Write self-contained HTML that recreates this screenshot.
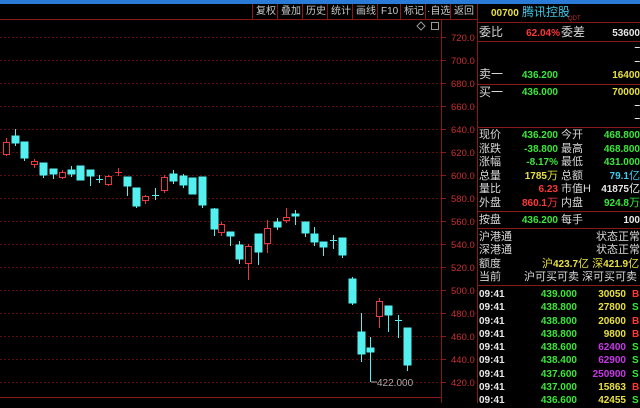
<!DOCTYPE html>
<html><head><meta charset="utf-8"><style>
*{margin:0;padding:0;box-sizing:border-box}
body{width:640px;height:403px;background:#000;overflow:hidden;position:relative;font-family:"Liberation Sans","Noto Sans CJK SC",sans-serif;color:#ddd}
.a{position:absolute;white-space:nowrap;line-height:13px}
.l{font-size:11px;color:#d8d8d8}
.v{font-size:10px;font-weight:bold;text-align:right}
.g{color:#3ae83a}.y{color:#e8e040}.r{color:#ff3838}.w{color:#e8e8e8}.c{color:#3cc8f0}.m{color:#c838e8}
.tb{position:absolute;top:5px;font-size:10px;color:#c8c8c8;line-height:14px}
.hl{position:absolute;left:477px;width:163px;height:1px;background:#8a1818}
</style></head><body>
<div style="position:absolute;left:0;top:0;width:640px;height:4px;background:#2a7ad8"></div>
<div style="position:absolute;left:0;top:19px;width:477px;height:1px;background:#8a1818"></div>
<div style="position:absolute;left:477px;top:4px;width:1px;height:399px;background:#8a1818"></div>
<div style="position:absolute;left:441px;top:20px;width:1px;height:383px;background:#8a1818"></div>
<svg style="position:absolute;left:0;top:0" width="477" height="403">
<g stroke="#5a0e0e" stroke-dasharray="2,2">
<line x1="0" x2="441" y1="37.5" y2="37.5"/><line x1="0" x2="441" y1="60.5" y2="60.5"/><line x1="0" x2="441" y1="83.5" y2="83.5"/><line x1="0" x2="441" y1="106.5" y2="106.5"/><line x1="0" x2="441" y1="129.5" y2="129.5"/><line x1="0" x2="441" y1="152.5" y2="152.5"/><line x1="0" x2="441" y1="175.5" y2="175.5"/><line x1="0" x2="441" y1="198.5" y2="198.5"/><line x1="0" x2="441" y1="221.5" y2="221.5"/><line x1="0" x2="441" y1="244.5" y2="244.5"/><line x1="0" x2="441" y1="267.5" y2="267.5"/><line x1="0" x2="441" y1="290.5" y2="290.5"/><line x1="0" x2="441" y1="313.5" y2="313.5"/><line x1="0" x2="441" y1="336.5" y2="336.5"/><line x1="0" x2="441" y1="359.5" y2="359.5"/><line x1="0" x2="441" y1="382.5" y2="382.5"/>
</g>
<line x1="0" x2="441" y1="397.5" y2="397.5" stroke="#8a1818"/>
<g fill="#c83030" font-size="9.5" font-family="Liberation Sans">
<text x="451" y="41">720.0</text><text x="451" y="64">700.0</text><text x="451" y="87">680.0</text><text x="451" y="110">660.0</text><text x="451" y="133">640.0</text><text x="451" y="156">620.0</text><text x="451" y="179">600.0</text><text x="451" y="202">580.0</text><text x="451" y="225">560.0</text><text x="451" y="248">540.0</text><text x="451" y="271">520.0</text><text x="451" y="294">500.0</text><text x="451" y="317">480.0</text><text x="451" y="340">460.0</text><text x="451" y="363">440.0</text><text x="451" y="386">420.0</text>
</g>
<g stroke="#8a1818"><line x1="441" x2="446" y1="37.5" y2="37.5"/><line x1="441" x2="446" y1="60.5" y2="60.5"/><line x1="441" x2="446" y1="83.5" y2="83.5"/><line x1="441" x2="446" y1="106.5" y2="106.5"/><line x1="441" x2="446" y1="129.5" y2="129.5"/><line x1="441" x2="446" y1="152.5" y2="152.5"/><line x1="441" x2="446" y1="175.5" y2="175.5"/><line x1="441" x2="446" y1="198.5" y2="198.5"/><line x1="441" x2="446" y1="221.5" y2="221.5"/><line x1="441" x2="446" y1="244.5" y2="244.5"/><line x1="441" x2="446" y1="267.5" y2="267.5"/><line x1="441" x2="446" y1="290.5" y2="290.5"/><line x1="441" x2="446" y1="313.5" y2="313.5"/><line x1="441" x2="446" y1="336.5" y2="336.5"/><line x1="441" x2="446" y1="359.5" y2="359.5"/><line x1="441" x2="446" y1="382.5" y2="382.5"/></g>
<path d="M421 22l4 4-4 4-4-4z" fill="none" stroke="#999"/>
<rect x="431.5" y="22.5" width="7" height="7" fill="none" stroke="#999"/>
<g stroke="#54f0f0" fill="#54f0f0">
<line x1="15.5" x2="15.5" y1="129" y2="146"/><rect x="12" y="136" width="7" height="7"/>
<line x1="24.5" x2="24.5" y1="142" y2="161"/><rect x="21" y="142" width="7" height="16"/>
<line x1="43.5" x2="43.5" y1="163" y2="178"/><rect x="40" y="163" width="7" height="12"/>
<line x1="53.5" x2="53.5" y1="169" y2="179"/><rect x="50" y="169" width="7" height="5"/>
<line x1="71.5" x2="71.5" y1="166" y2="177"/><rect x="68" y="170" width="7" height="4"/>
<rect x="77" y="166" width="7" height="14"/>
<line x1="90.5" x2="90.5" y1="170" y2="186"/><rect x="87" y="170" width="7" height="6"/>
<line x1="99.5" x2="99.5" y1="175" y2="183"/><line x1="96" x2="103" y1="179.5" y2="179.5"/>
<line x1="127.5" x2="127.5" y1="177" y2="196"/><rect x="124" y="177" width="7" height="9"/>
<line x1="136.5" x2="136.5" y1="188" y2="208"/><rect x="133" y="188" width="7" height="18"/>
<line x1="155.5" x2="155.5" y1="188" y2="200"/><line x1="152" x2="159" y1="195.5" y2="195.5"/>
<line x1="173.5" x2="173.5" y1="170" y2="184"/><rect x="170" y="174" width="7" height="7"/>
<line x1="183.5" x2="183.5" y1="174" y2="188"/><rect x="180" y="176" width="7" height="9"/>
<rect x="189" y="178" width="7" height="16"/>
<line x1="202.5" x2="202.5" y1="177" y2="208"/><rect x="199" y="177" width="7" height="28"/>
<line x1="214.5" x2="214.5" y1="208" y2="236"/><rect x="211" y="209" width="7" height="20"/>
<line x1="230.5" x2="230.5" y1="232" y2="246"/><rect x="227" y="232" width="7" height="4"/>
<line x1="239.5" x2="239.5" y1="241" y2="264"/><rect x="236" y="245" width="7" height="14"/>
<line x1="258.5" x2="258.5" y1="234" y2="265"/><rect x="255" y="234" width="7" height="18"/>
<line x1="277.5" x2="277.5" y1="218" y2="230"/><rect x="274" y="222" width="7" height="5"/>
<line x1="295.5" x2="295.5" y1="210" y2="225"/><rect x="292" y="214" width="7" height="2"/>
<line x1="305.5" x2="305.5" y1="222" y2="237"/><rect x="302" y="222" width="7" height="11"/>
<line x1="314.5" x2="314.5" y1="227" y2="246"/><rect x="311" y="234" width="7" height="8"/>
<line x1="323.5" x2="323.5" y1="242" y2="256"/><rect x="320" y="242" width="7" height="5"/>
<line x1="333.5" x2="333.5" y1="235" y2="249"/><line x1="330" x2="337" y1="240.5" y2="240.5"/>
<line x1="342.5" x2="342.5" y1="238" y2="258"/><rect x="339" y="238" width="7" height="17"/>
<line x1="352.5" x2="352.5" y1="277" y2="305"/><rect x="349" y="279" width="7" height="24"/>
<line x1="361.5" x2="361.5" y1="313" y2="362"/><rect x="358" y="332" width="7" height="22"/>
<line x1="370.5" x2="370.5" y1="337" y2="382"/><rect x="367" y="348" width="7" height="4"/>
<line x1="388.5" x2="388.5" y1="306" y2="332"/><rect x="385" y="306" width="7" height="9"/>
<line x1="398.5" x2="398.5" y1="315" y2="338"/><line x1="395" x2="402" y1="320.5" y2="320.5"/>
<line x1="407.5" x2="407.5" y1="328" y2="371"/><rect x="404" y="328" width="7" height="37"/>
</g>
<g stroke="#e83a3a" fill="none">
<line x1="6.5" x2="6.5" y1="138" y2="156"/><rect x="3.5" y="142.5" width="6" height="12" fill="#000"/>
<line x1="34.5" x2="34.5" y1="159" y2="168"/><rect x="31.5" y="161.5" width="6" height="3" fill="#000"/>
<line x1="62.5" x2="62.5" y1="170" y2="179"/><rect x="59.5" y="172.5" width="6" height="5" fill="#000"/>
<line x1="108.5" x2="108.5" y1="175" y2="186"/><rect x="105.5" y="176.5" width="6" height="8" fill="#000"/>
<line x1="118.5" x2="118.5" y1="168" y2="176"/><line x1="115" x2="122" y1="172.5" y2="172.5"/>
<line x1="145.5" x2="145.5" y1="195" y2="204"/><rect x="142.5" y="196.5" width="6" height="4" fill="#000"/>
<line x1="164.5" x2="164.5" y1="175" y2="193"/><rect x="161.5" y="177.5" width="6" height="13" fill="#000"/>
<line x1="221.5" x2="221.5" y1="222" y2="236"/><rect x="218.5" y="224.5" width="6" height="8" fill="#000"/>
<line x1="248.5" x2="248.5" y1="244" y2="280"/><rect x="245.5" y="246.5" width="6" height="17" fill="#000"/>
<line x1="267.5" x2="267.5" y1="220" y2="253"/><rect x="264.5" y="228.5" width="6" height="15" fill="#000"/>
<line x1="286.5" x2="286.5" y1="208" y2="223"/><rect x="283.5" y="217.5" width="6" height="3" fill="#000"/>
<line x1="379.5" x2="379.5" y1="298" y2="328"/><rect x="376.5" y="301.5" width="6" height="15" fill="#000"/>
</g>
<line x1="371" x2="377" y1="382" y2="382" stroke="#aaa"/>
<text x="377" y="386" fill="#aaa" font-size="10" font-family="Liberation Sans">422.000</text>
</svg>
<!-- toolbar -->
<div style="position:absolute;top:4px;left:0;width:477px;height:15px">
<div style="position:absolute;left:252px;top:0;width:1px;height:15px;background:#8a1818"></div>
<div style="position:absolute;left:277px;top:0;width:1px;height:15px;background:#8a1818"></div>
<div style="position:absolute;left:302px;top:0;width:1px;height:15px;background:#8a1818"></div>
<div style="position:absolute;left:327px;top:0;width:1px;height:15px;background:#8a1818"></div>
<div style="position:absolute;left:352px;top:0;width:1px;height:15px;background:#8a1818"></div>
<div style="position:absolute;left:377px;top:0;width:1px;height:15px;background:#8a1818"></div>
<div style="position:absolute;left:400px;top:0;width:1px;height:15px;background:#8a1818"></div>
<div style="position:absolute;left:425px;top:0;width:1px;height:15px;background:#8a1818"></div>
<div style="position:absolute;left:450px;top:0;width:1px;height:15px;background:#8a1818"></div>
</div>
<div class="tb" style="left:256px">复权</div><div class="tb" style="left:281px">叠加</div><div class="tb" style="left:306px">历史</div><div class="tb" style="left:331px">统计</div><div class="tb" style="left:356px">画线</div><div class="tb" style="left:381px">F10</div><div class="tb" style="left:404px">标记</div><div class="tb" style="left:427px">·自选</div><div class="tb" style="left:454px">返回</div>
<!-- right panel -->
<div class="a" style="left:491px;top:7px;font-size:10px;font-weight:bold;color:#e8e040">00700</div>
<div class="a" style="left:522px;top:6px;font-size:12px;color:#3cc8e8">腾讯控股</div>
<div class="a" style="left:568px;top:13px;font-size:6px;color:#c03030">QDT</div>
<div class="hl" style="top:22px"></div>
<div class="a l" style="left:479px;top:26px;font-size:12px">委比</div>
<div class="a v r" style="left:520px;top:27px;width:40px">62.04%</div>
<div class="a l" style="left:561px;top:26px;font-size:12px">委差</div>
<div class="a v w" style="left:590px;top:27px;width:50px">53600</div>
<div class="hl" style="top:41px"></div>
<div class="a v w" style="left:620px;top:41px;width:20px">–</div>
<div class="a v w" style="left:620px;top:55px;width:20px">–</div>
<div class="a l" style="left:479px;top:68px;font-size:12px">卖一</div>
<div class="a v g" style="left:500px;top:69px;width:58px">436.200</div>
<div class="a v y" style="left:590px;top:69px;width:50px">16400</div>
<div class="hl" style="top:84px"></div>
<div class="a l" style="left:479px;top:86px;font-size:12px">买一</div>
<div class="a v g" style="left:500px;top:86px;width:58px">436.000</div>
<div class="a v y" style="left:590px;top:86px;width:50px">70000</div>
<div class="a v w" style="left:620px;top:99px;width:20px">–</div>
<div class="a v w" style="left:620px;top:112px;width:20px">–</div>
<div class="hl" style="top:127px"></div>
<div class="a l" style="left:479px;top:129px">现价</div><div class="a v g" style="left:500px;top:129px;width:58px">436.200</div><div class="a l" style="left:561px;top:129px">今开</div><div class="a v g" style="left:590px;top:129px;width:50px">468.800</div>
<div class="a l" style="left:479px;top:143px">涨跌</div><div class="a v g" style="left:500px;top:143px;width:58px">-38.800</div><div class="a l" style="left:561px;top:143px">最高</div><div class="a v g" style="left:590px;top:143px;width:50px">468.800</div>
<div class="a l" style="left:479px;top:156px">涨幅</div><div class="a v g" style="left:500px;top:156px;width:58px">-8.17%</div><div class="a l" style="left:561px;top:156px">最低</div><div class="a v g" style="left:590px;top:156px;width:50px">431.000</div>
<div class="a l" style="left:479px;top:170px">总量</div><div class="a v y" style="left:500px;top:170px;width:58px">1785<span style="font-weight:normal;font-size:11px">万</span></div><div class="a l" style="left:561px;top:170px">总额</div><div class="a v c" style="left:590px;top:170px;width:50px">79.1<span style="font-weight:normal;font-size:11px">亿</span></div>
<div class="a l" style="left:479px;top:183px">量比</div><div class="a v r" style="left:500px;top:183px;width:58px">6.23</div><div class="a l" style="left:561px;top:183px">市值H</div><div class="a v w" style="left:590px;top:183px;width:50px">41875<span style="font-weight:normal;font-size:11px">亿</span></div>
<div class="a l" style="left:479px;top:197px">外盘</div><div class="a v r" style="left:500px;top:197px;width:58px">860.1<span style="font-weight:normal;font-size:11px">万</span></div><div class="a l" style="left:561px;top:197px">内盘</div><div class="a v g" style="left:590px;top:197px;width:50px">924.8<span style="font-weight:normal;font-size:11px">万</span></div>
<div class="hl" style="top:211px"></div>
<div class="a l" style="left:479px;top:214px">按盘</div><div class="a v g" style="left:500px;top:214px;width:58px">436.200</div><div class="a l" style="left:561px;top:214px">每手</div><div class="a v w" style="left:590px;top:214px;width:50px">100</div>
<div class="hl" style="top:228px"></div>
<div class="a l" style="left:479px;top:231px">沪港通</div><div class="a l" style="left:596px;top:231px">状态正常</div>
<div class="a l" style="left:479px;top:244px">深港通</div><div class="a l" style="left:596px;top:244px">状态正常</div>
<div class="a l" style="left:479px;top:258px">额度</div><div class="a y" style="left:542px;top:258px;font-size:11px">沪<b style="font-size:10px">423.7</b>亿 深<b style="font-size:10px">421.9</b>亿</div>
<div class="a l" style="left:479px;top:271px">当前</div><div class="a l" style="left:524px;top:271px">沪可买可卖 深可买可卖</div>
<div class="hl" style="top:285px"></div>
<div style="position:absolute;left:479px;top:288px;width:161px;font-size:10px;font-weight:bold;line-height:13.3px">
<div style="position:relative;height:13.3px"><span class="w">09:41</span><span class="g" style="position:absolute;right:63px">439.000</span><span class="y" style="position:absolute;right:14px">30050</span><span class="r" style="position:absolute;left:153px">B</span></div>
<div style="position:relative;height:13.3px"><span class="w">09:41</span><span class="g" style="position:absolute;right:63px">438.800</span><span class="y" style="position:absolute;right:14px">27800</span><span class="g" style="position:absolute;left:153px">S</span></div>
<div style="position:relative;height:13.3px"><span class="w">09:41</span><span class="g" style="position:absolute;right:63px">438.800</span><span class="y" style="position:absolute;right:14px">20600</span><span class="r" style="position:absolute;left:153px">B</span></div>
<div style="position:relative;height:13.3px"><span class="w">09:41</span><span class="g" style="position:absolute;right:63px">438.800</span><span class="y" style="position:absolute;right:14px">9800</span><span class="r" style="position:absolute;left:153px">B</span></div>
<div style="position:relative;height:13.3px"><span class="w">09:41</span><span class="g" style="position:absolute;right:63px">438.600</span><span class="m" style="position:absolute;right:14px">62400</span><span class="g" style="position:absolute;left:153px">S</span></div>
<div style="position:relative;height:13.3px"><span class="w">09:41</span><span class="g" style="position:absolute;right:63px">438.400</span><span class="m" style="position:absolute;right:14px">62900</span><span class="g" style="position:absolute;left:153px">S</span></div>
<div style="position:relative;height:13.3px"><span class="w">09:41</span><span class="g" style="position:absolute;right:63px">437.600</span><span class="m" style="position:absolute;right:14px">250900</span><span class="g" style="position:absolute;left:153px">S</span></div>
<div style="position:relative;height:13.3px"><span class="w">09:41</span><span class="g" style="position:absolute;right:63px">437.000</span><span class="y" style="position:absolute;right:14px">15863</span><span class="r" style="position:absolute;left:153px">B</span></div>
<div style="position:relative;height:13.3px"><span class="w">09:41</span><span class="g" style="position:absolute;right:63px">436.600</span><span class="y" style="position:absolute;right:14px">42455</span><span class="g" style="position:absolute;left:153px">S</span></div>
</div>
</body></html>
